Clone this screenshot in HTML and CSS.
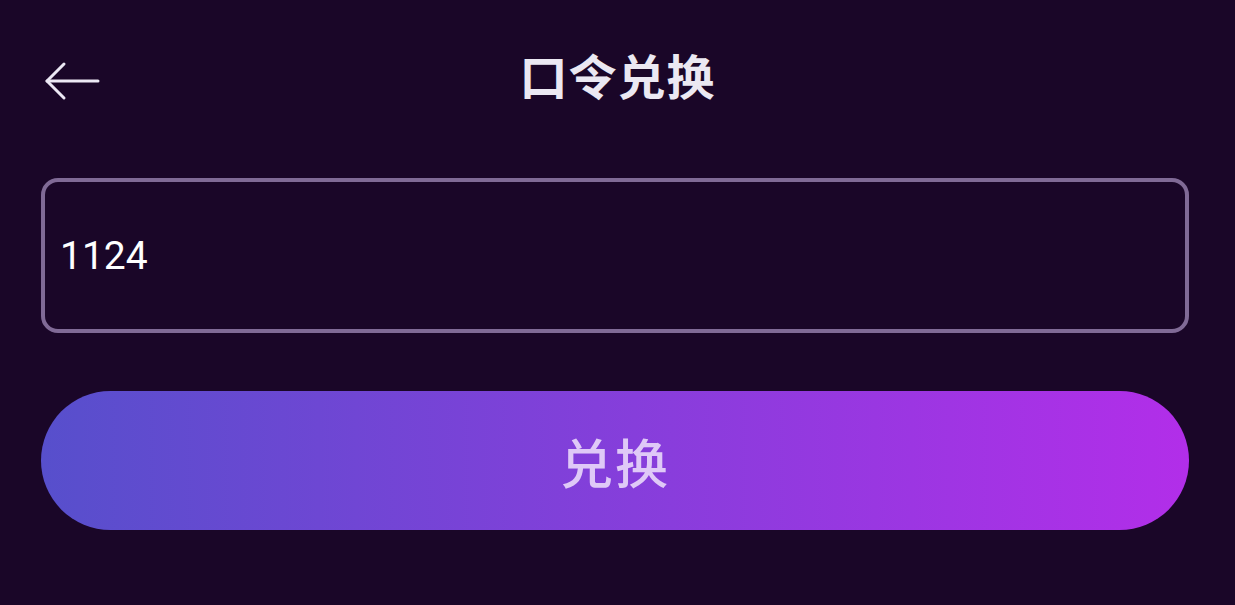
FILE: index.html
```html
<!DOCTYPE html>
<html lang="zh-CN">
<head>
    <meta charset="UTF-8">
    <meta name="viewport" content="width=device-width, initial-scale=1.0">
    <title>口令兑换</title>
    <link rel="stylesheet" href="styles.css">
</head>
<body>
    <header class="top-bar">
        <a class="back" href="#" aria-label="返回">
            <svg width="56" height="40" viewBox="0 0 56 40" fill="none" stroke="#ece8f4" stroke-width="3" stroke-linecap="round" stroke-linejoin="round">
                <path d="M54 20H3"/>
                <path d="M20 3L3 20L20 37"/>
            </svg>
        </a>
        <h1>口令兑换</h1>
    </header>

    <form class="redeem">
        <input type="text" class="code" name="code" value="1124">
        <button type="submit" class="submit">兑换</button>
    </form>
</body>
</html>
```

FILE: styles.css
```css
body {
    margin: 0;
    background-color: #1a0628;
    font-family: Roboto, "Noto Sans CJK SC", sans-serif;
}
.top-bar {
    position: relative;
    height: 156px;
    display: flex;
    align-items: center;
    justify-content: center;
}
.top-bar h1 {
    margin: 0;
    margin-top: -8px;
    font-size: 48px;
    font-weight: bold;
    color: #ebe8f2;
    letter-spacing: 1px;
}
.back {
    position: absolute;
    left: 44px;
    top: 61px;
    display: block;
    line-height: 0;
}
.redeem {
    padding: 22px 46px 0 41px;
    display: flex;
    flex-direction: column;
    gap: 58px;
}
.code {
    box-sizing: border-box;
    width: 100%;
    height: 155px;
    padding: 0 15px;
    background: transparent;
    border: 4px solid #806a96;
    border-radius: 17px;
    color: #ffffff;
    font-family: Roboto, sans-serif;
    font-size: 39px;
    outline: none;
}
.submit {
    width: 100%;
    height: 139px;
    border: none;
    border-radius: 70px;
    background: linear-gradient(to right, #574fcc, #b22ee9);
    color: #dfc9f7;
    font-family: "Noto Sans CJK SC", sans-serif;
    font-size: 53px;
    font-weight: 500;
    letter-spacing: 2px;
    cursor: pointer;
}
```
